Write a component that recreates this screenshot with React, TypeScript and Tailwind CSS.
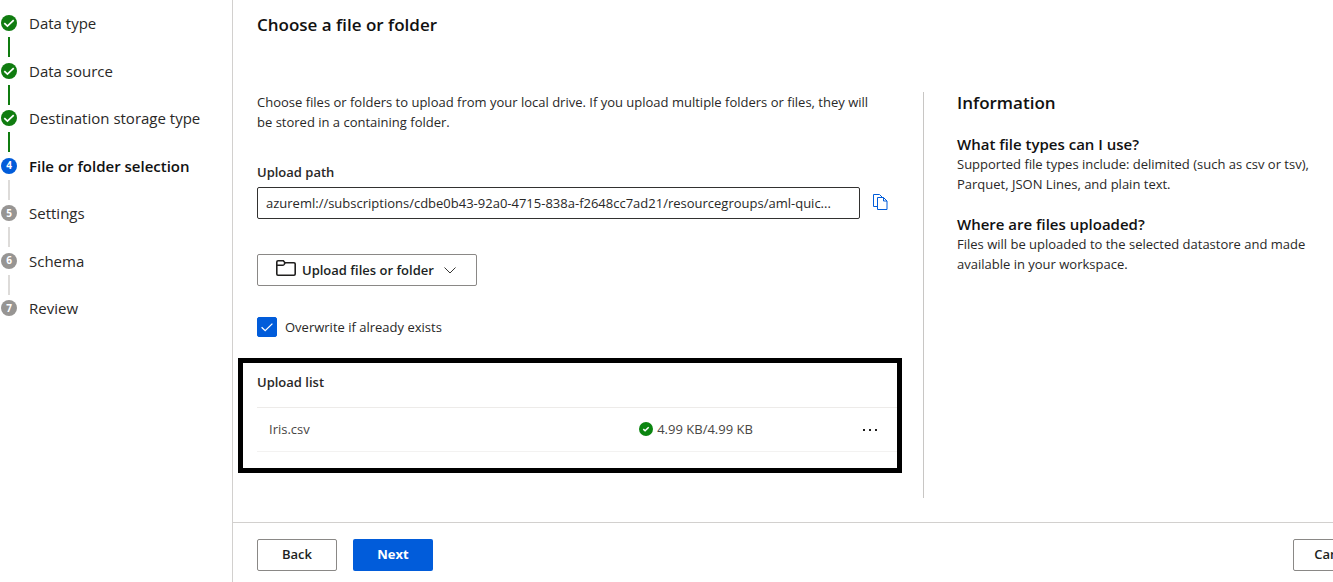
import React from 'react';

type StepState = 'done' | 'current' | 'pending';

const steps: { label: string; state: StepState }[] = [
  { label: 'Data type', state: 'done' },
  { label: 'Data source', state: 'done' },
  { label: 'Destination storage type', state: 'done' },
  { label: 'File or folder selection', state: 'current' },
  { label: 'Settings', state: 'pending' },
  { label: 'Schema', state: 'pending' },
  { label: 'Review', state: 'pending' },
];

const badgeColor: Record<StepState, string> = {
  done: 'bg-[#107c10]',
  current: 'bg-[#015cda]',
  pending: 'bg-[#979593]',
};

function Check({ className, width = 2 }: { className: string; width?: number }) {
  return (
    <svg viewBox="0 0 16 16" className={className} fill="none" stroke="currentColor" strokeWidth={width} aria-hidden="true">
      <path d="M2.600 8.200 6.200 11.600 13.400 4.600" />
    </svg>
  );
}

function Steps() {
  return (
    <nav aria-label="Steps" className="w-[233px] shrink-0 border-r border-[#d2d0ce] pt-[11px]">
      <ol className="flex h-[333px] flex-col">
        {steps.map((step, i) => (
          <li key={step.label} className="flex flex-1 gap-3" aria-current={step.state === 'current' ? 'step' : undefined}>
            <div className="flex w-[17px] flex-col items-end pt-1">
              <span className={`flex size-4 items-center justify-center rounded-full text-[10px] font-bold text-white ${badgeColor[step.state]}`}>
                {step.state === 'done' ? <Check className="size-3.5" /> : i + 1}
              </span>
              {i < steps.length - 1 && (
                <span className={`mt-[6px] mr-[7px] h-5 w-0.5 ${step.state === 'done' ? 'bg-[#107c10]' : 'bg-[#dddbd9]'}`} />
              )}
            </div>
            <span className={`text-[15px] leading-6 ${step.state === 'current' ? 'font-semibold text-[#111]' : 'text-[#292827]'}`}>
              {step.label}
            </span>
          </li>
        ))}
      </ol>
    </nav>
  );
}

const outlineButton = 'h-8 rounded-xs border border-[#8a8886] bg-white font-semibold text-[#201f1e]';

function UploadForm() {
  return (
    <section className="min-w-0 flex-1 pr-[21px] pl-6 text-[13px] leading-5">
      <p className="pr-5">
        Choose files or folders to upload from your local drive. If you upload multiple folders or files, they will be
        stored in a containing folder.
      </p>

      <label htmlFor="path" className="mt-[30px] block font-semibold">
        Upload path
      </label>
      <div className="mt-[5px] flex items-center">
        <input
          id="path"
          readOnly
          defaultValue="azureml://subscriptions/cdbe0b43-92a0-4715-838a-f2648cc7ad21/resourcegroups/aml-quic..."
          className="h-8 min-w-0 flex-1 rounded-xs border border-[#323130] px-2 text-ellipsis outline-none"
        />
        <button type="button" aria-label="Copy path" className="ml-3 w-[30px] pb-0.5 text-[#015cda]">
          <svg viewBox="0 0 16 18" className="h-[18px] w-4" fill="none" stroke="currentColor" aria-hidden="true">
            <path d="M5.500 13.500h-4v-12H7.500l3 3M5.500 4.500h6l3.500 3.500v8.500h-9.500zM11.500 4.500v3.500h3.500" />
          </svg>
        </button>
      </div>

      <button type="button" className={`mt-[35px] flex w-[220px] items-center pl-[18px] ${outlineButton}`}>
        <svg viewBox="0 0 20 16" className="mb-1 h-4 w-5" fill="none" stroke="currentColor" strokeWidth="1.6" aria-hidden="true">
          <path d="M.8 2v12q0 1.200 1.200 1.200h16q1.200 0 1.200-1.200V4q0-1.200-1.200-1.200H9L7.300.8H2Q.8.8.8 2ZM.8 5.300h5.700q1 0 1.500-.7l1.200-1.800" />
        </svg>
        <span className="ml-1.5">Upload files or folder</span>
        <svg viewBox="0 0 12 7" className="ml-2.5 h-[7px] w-3" fill="none" stroke="currentColor" strokeWidth=".9" aria-hidden="true">
          <path d="M.5.5 6 6 11.500.5" />
        </svg>
      </button>

      <label className="mt-[31px] flex w-fit items-center gap-2">
        <span className="grid size-5">
          <input type="checkbox" defaultChecked className="peer col-start-1 row-start-1 size-5 appearance-none rounded-xs border border-[#323130] checked:border-[#015cda] checked:bg-[#015cda]" />
          <Check width={1.3} className="pointer-events-none invisible col-start-1 row-start-1 size-4 place-self-center text-white peer-checked:visible" />
        </span>
        Overwrite if already exists
      </label>

      <div className="mt-[21px] -ml-[19px] border-[5px] border-black pt-[9px] pb-4 pl-3.5">
        <h2 className="font-semibold">Upload list</h2>
        <table className="mt-[15px] w-full table-fixed border-collapse text-[#484644]">
          <tbody>
            <tr className="h-11 border-t border-b border-t-[#edebe9] border-b-[#f3f2f1]">
              <td className="w-[58%] pb-0.5 pl-3">Iris.csv</td>
              <td className="pb-0.5 pl-[11px]">
                <span className="flex items-center gap-1">
                  <span className="flex size-3.5 items-center justify-center rounded-full bg-[#0b8510] text-white">
                    <Check className="size-2" width={3} />
                  </span>
                  4.99 KB/4.99 KB
                </span>
              </td>
              <td className="w-[54px]">
                <button type="button" aria-label="More actions" className="ml-5 flex gap-1 py-2">
                  <span className="size-0.5 bg-[#201f1e]" />
                  <span className="size-0.5 bg-[#201f1e]" />
                  <span className="size-0.5 bg-[#201f1e]" />
                </button>
              </td>
            </tr>
          </tbody>
        </table>
      </div>
    </section>
  );
}

function Information() {
  return (
    <aside className="w-[410px] shrink-0 border-l border-[#c8c6c4] pr-3 pl-[33px] text-[13px] leading-5">
      <h2 className="text-[17px] leading-[22px] font-semibold text-[#111]">Information</h2>
      <h3 className="mt-5 text-[15px] leading-5 font-semibold text-[#111]">What file types can I use?</h3>
      <p>Supported file types include: delimited (such as csv or tsv), Parquet, JSON Lines, and plain text.</p>
      <h3 className="mt-5 text-[15px] leading-5 font-semibold text-[#111]">Where are files uploaded?</h3>
      <p>Files will be uploaded to the selected datastore and made available in your workspace.</p>
    </aside>
  );
}

export default function App() {
  return (
    <div className="flex min-h-screen bg-white font-['Open_Sans','Noto_Sans',sans-serif] text-[#292827]">
      <Steps />
      <main className="flex min-w-0 flex-1 flex-col">
        <h1 className="pt-[13px] pl-6 text-[17px] leading-6 font-semibold text-[#111]">Choose a file or folder</h1>
        <div className="mt-[55px] mb-6 flex flex-1">
          <UploadForm />
          <Information />
        </div>
        <footer className="flex gap-4 overflow-hidden border-t border-[#d2d0ce] pt-4 pb-[11px] pl-6 text-[13px]">
          <button type="button" className={`w-20 ${outlineButton}`}>Back</button>
          <button type="button" className="h-8 w-20 rounded-xs bg-[#015cda] font-bold text-white">Next</button>
          <button type="button" className={`-mr-11 ml-auto w-[84px] shrink-0 ${outlineButton}`}>Cancel</button>
        </footer>
      </main>
    </div>
  );
}
